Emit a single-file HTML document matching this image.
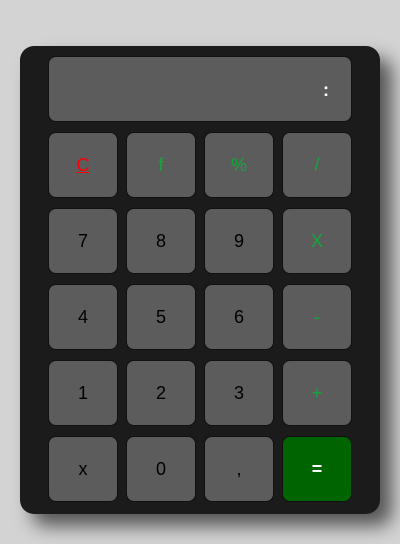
<!DOCTYPE html><html><head><style>
body{margin:0;width:400px;height:544px;background:#d3d3d3;font-family:"Liberation Sans",sans-serif;position:relative;overflow:hidden}
.calc{position:absolute;left:20px;top:46px;width:360px;height:468px;background:#1b1b1b;border-radius:14px;box-shadow:12px 12px 18px rgba(0,0,0,.6)}
.d{position:absolute;left:48px;top:56px;width:302px;height:64px;background:#5c5c5c;border:1px solid #111;border-radius:8px}
.d span{position:absolute;right:22px;top:23px;color:#fff;font-weight:bold;font-size:18px}
.b{position:absolute;width:68px;height:64px;background:#5c5c5c;border:1px solid #111;border-radius:8px;display:flex;align-items:center;justify-content:center;font-size:18px;color:#000}
.g{color:#12a83a}
</style></head><body>
<div class="calc"></div>
<div class="d"><span>:</span></div>
<div class="b" style="left:48px;top:132px;color:#f00;text-decoration:underline">C</div>
<div class="b g" style="left:126px;top:132px">f</div>
<div class="b g" style="left:204px;top:132px">%</div>
<div class="b g" style="left:282px;top:132px">/</div>
<div class="b" style="left:48px;top:208px">7</div>
<div class="b" style="left:126px;top:208px">8</div>
<div class="b" style="left:204px;top:208px">9</div>
<div class="b g" style="left:282px;top:208px">X</div>
<div class="b" style="left:48px;top:284px">4</div>
<div class="b" style="left:126px;top:284px">5</div>
<div class="b" style="left:204px;top:284px">6</div>
<div class="b g" style="left:282px;top:284px">-</div>
<div class="b" style="left:48px;top:360px">1</div>
<div class="b" style="left:126px;top:360px">2</div>
<div class="b" style="left:204px;top:360px">3</div>
<div class="b g" style="left:282px;top:360px">+</div>
<div class="b" style="left:48px;top:436px">x</div>
<div class="b" style="left:126px;top:436px">0</div>
<div class="b" style="left:204px;top:436px">,</div>
<div class="b" style="left:282px;top:436px;background:#006400;color:#fff;font-weight:bold">=</div>
</body></html>
